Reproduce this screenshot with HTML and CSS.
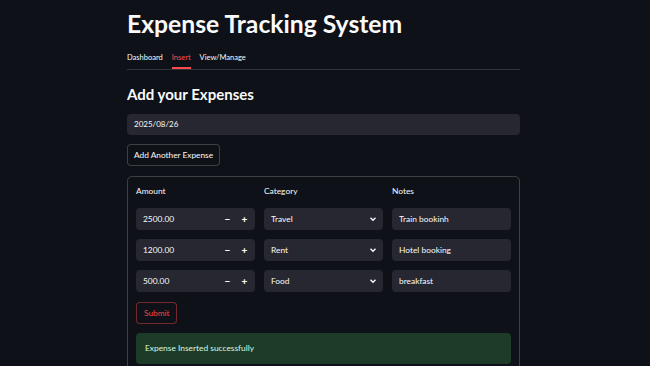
FILE: index.html
```html
<!DOCTYPE html>
<html>
<head>
<meta charset="utf-8">
<link rel="stylesheet" href="styles.css">
</head>
<body>
<main class="main">
  <h1 class="title">Expense Tracking System</h1>
  <nav class="tabs">
    <span class="tab">Dashboard</span>
    <span class="tab active">Insert</span>
    <span class="tab">View/Manage</span>
  </nav>
  <h2 class="subtitle">Add your Expenses</h2>
  <div class="date-input">2025/08/26</div>
  <button class="btn">Add Another Expense</button>
  <section class="form-box">
    <div class="grid">
      <div class="label">Amount</div>
      <div class="label">Category</div>
      <div class="label">Notes</div>

      <div class="field num"><span class="val">2500.00</span><span class="step">&minus;</span><span class="step">+</span></div>
      <div class="field sel"><span class="val">Travel</span><svg class="chev" viewBox="0 0 10 10"><path d="M2.5 3.8 L5 6.3 L7.5 3.8" /></svg></div>
      <div class="field"><span class="val">Train bookinh</span></div>

      <div class="field num"><span class="val">1200.00</span><span class="step">&minus;</span><span class="step">+</span></div>
      <div class="field sel"><span class="val">Rent</span><svg class="chev" viewBox="0 0 10 10"><path d="M2.5 3.8 L5 6.3 L7.5 3.8" /></svg></div>
      <div class="field"><span class="val">Hotel booking</span></div>

      <div class="field num"><span class="val">500.00</span><span class="step">&minus;</span><span class="step">+</span></div>
      <div class="field sel"><span class="val">Food</span><svg class="chev" viewBox="0 0 10 10"><path d="M2.5 3.8 L5 6.3 L7.5 3.8" /></svg></div>
      <div class="field"><span class="val">breakfast</span></div>
    </div>
    <button class="btn submit">Submit</button>
    <div class="alert">Expense Inserted successfully</div>
  </section>
</main>
</body>
</html>
```

FILE: styles.css
```css
html, body {
  margin: 0;
  padding: 0;
  background: #0e1117;
  color: #fafafa;
  font-family: Lato, "Noto Sans", sans-serif;
  height: 366px;
  overflow: hidden;
}
.main {
  width: 393px;
  margin-left: 127px;
  padding-top: 8px;
}
.title {
  margin: 0;
  font-size: 24.7px;
  line-height: 32px;
  font-weight: 700;
}
.tabs {
  display: flex;
  gap: 9px;
  margin-top: 9px;
  border-bottom: 1px solid #31333b;
  font-size: 7.5px;
  font-weight: 400;
}
.tab {
  padding: 4px 0 6px;
  line-height: 10px;
  color: #fafafa;
}
.tab.active {
  color: #ff4b4b;
  box-shadow: inset 0 -2px 0 #ff4b4b;
}
.subtitle {
  margin: 13px 0 0;
  font-size: 15px;
  line-height: 22px;
  font-weight: 700;
}
.date-input {
  margin-top: 9px;
  height: 21px;
  background: #262730;
  border-radius: 4px;
  font-size: 8px;
  line-height: 21px;
  padding-left: 7px;
}
.btn {
  display: block;
  margin-top: 9px;
  height: 22px;
  padding: 0 6px;
  background: #0e1117;
  color: #fafafa;
  border: 1px solid rgba(250, 250, 250, 0.2);
  border-radius: 4px;
  font-family: inherit;
  font-size: 8.3px;
}
.form-box {
  margin-top: 10px;
  border: 1px solid rgba(250, 250, 250, 0.2);
  border-radius: 5px;
  padding: 8px 8px 8px;
  height: 185px;
}
.grid {
  display: grid;
  grid-template-columns: repeat(3, 1fr);
  column-gap: 9px;
  row-gap: 9px;
}
.label {
  font-size: 8.4px;
  line-height: 13px;
  margin-bottom: 1px;
}
.field {
  height: 22px;
  background: #262730;
  border-radius: 4px;
  display: flex;
  align-items: center;
  padding: 0 7px;
  font-size: 8.4px;
}
.field .val { flex: 1; }
.step {
  width: 17px;
  text-align: center;
  font-weight: 900;
  font-size: 10px;
}
.num { padding-right: 2px; }
.chev {
  width: 10px;
  height: 10px;
  fill: none;
  stroke: #fafafa;
  stroke-width: 1.4;
}
.sel { padding-right: 5px; }
.submit {
  margin-top: 10px;
  padding: 0 7px;
  color: #f04848;
  border-color: rgba(255, 75, 75, 0.42);
}
.alert {
  margin-top: 9px;
  height: 31px;
  background: #1c3c27;
  border-radius: 4px;
  color: #dcf7e3;
  font-size: 8.4px;
  line-height: 31px;
  padding-left: 9px;
}
```
